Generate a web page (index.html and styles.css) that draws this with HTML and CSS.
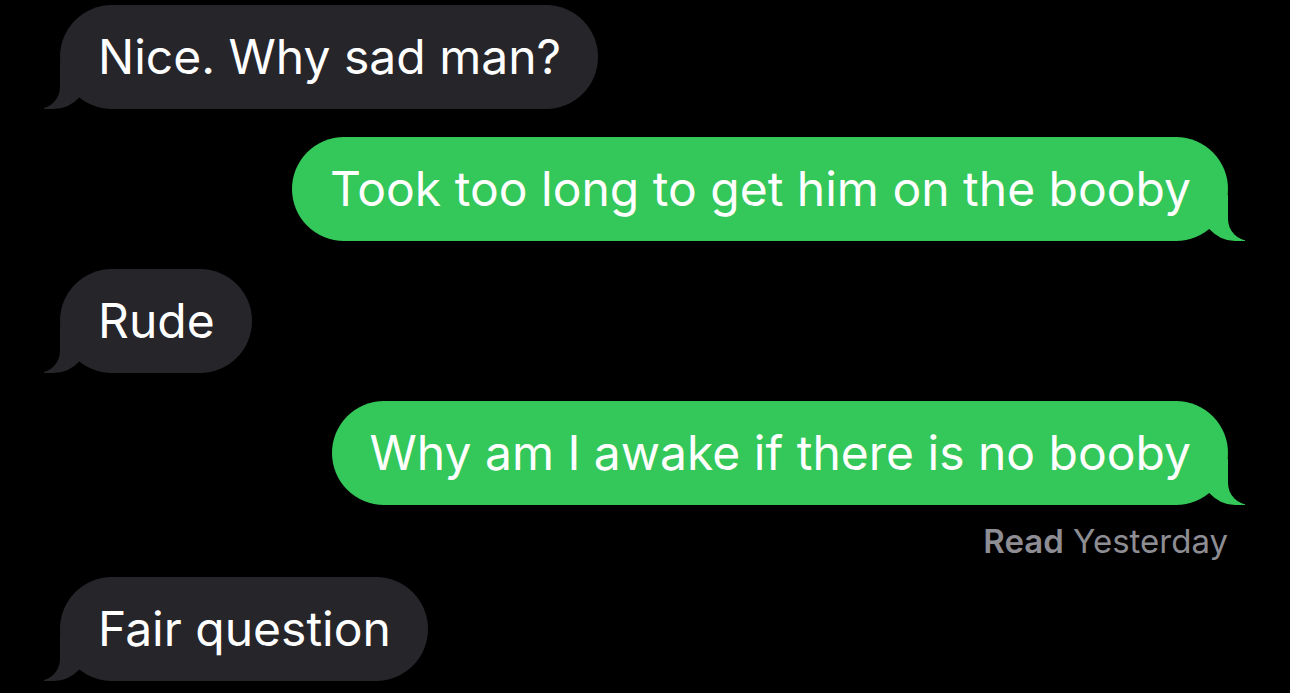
FILE: index.html
```html
<!DOCTYPE html>
<html lang="en">
<head>
    <meta charset="UTF-8">
    <meta name="viewport" content="width=device-width, initial-scale=1.0">
    <title>Messages</title>
    <link rel="stylesheet" href="styles.css">
</head>
<body>
    <div class="thread">
        <div class="row in-row">
            <div class="msg in">Nice. Why sad man?</div>
        </div>
        <div class="row out-row">
            <div class="msg out">Took too long to get him on the booby</div>
        </div>
        <div class="row in-row">
            <div class="msg in">Rude</div>
        </div>
        <div class="row out-row last">
            <div class="msg out">Why am I awake if there is no booby</div>
        </div>
        <div class="receipt">
            <strong>Read</strong> Yesterday
        </div>
        <div class="row in-row">
            <div class="msg in">Fair question</div>
        </div>
    </div>
</body>
</html>
```

FILE: styles.css
```css
body {
    margin: 0;
    background-color: #000;
    font-family: Inter, "Noto Sans", sans-serif;
    overflow: hidden;
}
.thread {
    display: flex;
    flex-direction: column;
    padding: 5px 62px 0 60px;
}
.row {
    display: flex;
    margin-bottom: 28px;
}
.row.last {
    margin-bottom: 0;
}
.in-row {
    justify-content: flex-start;
}
.out-row {
    justify-content: flex-end;
}
.msg {
    position: relative;
    height: 104px;
    line-height: 104px;
    padding: 0 37px 0 38px;
    border-radius: 52px;
    font-size: 48px;
    color: #fff;
    white-space: nowrap;
    z-index: 0;
}
.msg.in {
    background-color: #26252a;
}
.msg.out {
    background-color: #34c759;
}
/* tails */
.msg::before,
.msg::after {
    content: "";
    position: absolute;
    bottom: 0;
    height: 46px;
}
.msg.in::before {
    left: -16px;
    width: 46px;
    background-color: #26252a;
    border-bottom-right-radius: 36px 40px;
    z-index: -1;
}
.msg.in::after {
    left: -60px;
    width: 60px;
    background-color: #000;
    border-bottom-right-radius: 22px;
    z-index: -1;
}
.msg.out::before {
    right: -17px;
    width: 46px;
    background-color: #34c759;
    border-bottom-left-radius: 36px 40px;
    z-index: -1;
}
.msg.out::after {
    right: -60px;
    width: 60px;
    background-color: #000;
    border-bottom-left-radius: 22px;
    z-index: -1;
}
.receipt {
    height: 72px;
    line-height: 72px;
    text-align: right;
    font-size: 33px;
    color: #8d8d93;
}
.receipt strong {
    font-weight: 600;
}
```
